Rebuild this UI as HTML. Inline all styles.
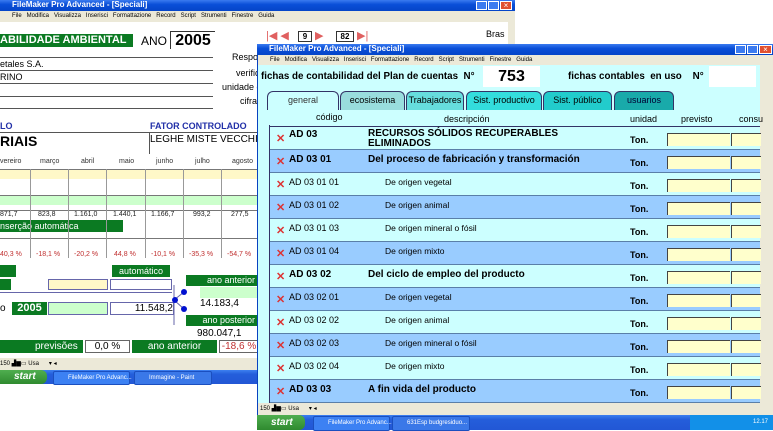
<!DOCTYPE html>
<html><head><meta charset="utf-8"><style>
*{margin:0;padding:0;box-sizing:border-box}
body{width:773px;height:430px;overflow:hidden;background:#fff;font-family:"Liberation Sans",sans-serif;position:relative}
.a{position:absolute;white-space:nowrap}
.tb{background:linear-gradient(#3a7bf0,#0a4fd8 40%,#0545c8);color:#fff;font-weight:bold;font-size:8px;line-height:10px;padding-left:12px}
.menu{background:#ece9d8;font-size:6px;line-height:9px;color:#000}
.g{background:#0b7a22;color:#fff}
.task{background:linear-gradient(#3d80f0,#245edb 30%,#2257d5);}
.start{background:linear-gradient(#4fae4f,#2f8a2f);color:#fff;font-style:italic;font-weight:bold;font-size:10px;line-height:13px;padding-left:14px;border-radius:0 6px 6px 0}
.tbtn{background:#3c81f3;color:#fff;font-size:6px;line-height:12px;padding-left:14px;border:1px solid #1b4fbf;border-radius:2px}
.hl{height:1px;background:#555}
.vl{width:1px;background:#555}
.row{position:absolute;left:270px;width:490px;height:23px;border-bottom:1px solid #5a7fa8}
.c{background:#ccffff}.b{background:#99ccff}
.x{position:absolute;left:6px;top:7px;color:#d33;font-size:11px;font-weight:bold;line-height:10px}
.cd{position:absolute;left:19px;top:4px;font-size:9px}
.ds{position:absolute;left:115px;top:4px;font-size:8.5px}
.bd{font-weight:bold;font-size:10px}
.ton{position:absolute;left:360px;top:8px;font-size:9px;font-weight:bold}
.y1{position:absolute;left:397px;top:6px;width:63px;height:13px;background:#ffffcc;border-left:1px solid #444;border-top:1px solid #444}
.y2{position:absolute;left:461px;top:6px;width:30px;height:13px;background:#ffffcc;border-left:1px solid #444;border-top:1px solid #444}
.tab{position:absolute;top:91px;height:19px;border:1px solid #336;border-bottom:none;border-radius:6px 6px 0 0;font-size:9px;text-align:center;line-height:17px}
.mon{font-size:7px;color:#333}
</style></head><body>
<!-- back window -->
<div class="a tb" style="left:0;top:0;width:515px;height:11px">FileMaker Pro Advanced - [Speciali]</div>
<div class="a" style="left:476px;top:1px;width:11px;height:9px;background:#3c7bf0;border:1px solid #fff"></div>
<div class="a" style="left:488px;top:1px;width:11px;height:9px;background:#3c7bf0;border:1px solid #fff"></div>
<div class="a" style="left:500px;top:1px;width:12px;height:9px;background:#e05030;border:1px solid #fff;color:#fff;font-size:8px;line-height:7px;text-align:center">×</div>
<div class="a menu" style="left:0;top:11px;width:515px;height:11px;padding-left:12px;line-height:11px">File&nbsp;&nbsp; Modifica&nbsp;&nbsp; Visualizza&nbsp;&nbsp; Inserisci&nbsp;&nbsp; Formattazione&nbsp;&nbsp; Record&nbsp;&nbsp; Script&nbsp;&nbsp; Strumenti&nbsp;&nbsp; Finestre&nbsp;&nbsp; Guida</div>
<div class="a" style="left:508px;top:22px;width:7px;height:22px;background:#ece9d8"></div>
<div class="a" style="left:266px;top:29px;color:#e06060;font-size:11px">|◀ ◀</div>
<div class="a" style="left:298px;top:31px;width:14px;height:11px;border:1px solid #333;font-size:8px;text-align:center;font-weight:bold">9</div>
<div class="a" style="left:315px;top:29px;color:#e06060;font-size:11px">▶</div>
<div class="a" style="left:336px;top:31px;width:18px;height:11px;border:1px solid #333;font-size:8px;text-align:center;font-weight:bold">82</div>
<div class="a" style="left:357px;top:29px;color:#e06060;font-size:11px">▶|</div>
<div class="a" style="left:486px;top:29px;font-size:9px">Bras</div>

<div class="a g" style="left:0;top:34px;width:133px;height:13px;font-weight:bold;font-size:11px;line-height:13px;overflow:hidden">ABILIDADE AMBIENTAL</div>
<div class="a" style="left:141px;top:34px;font-size:12px">ANO</div>
<div class="a" style="left:170px;top:31px;width:45px;height:18px;border-left:1px solid #333;border-top:1px solid #333;font-size:16px;font-weight:bold;text-align:center;line-height:18px">2005</div>
<div class="a hl" style="left:0;top:57px;width:213px"></div>
<div class="a hl" style="left:0;top:70px;width:213px"></div>
<div class="a hl" style="left:0;top:83px;width:213px"></div>
<div class="a hl" style="left:0;top:96px;width:213px"></div>
<div class="a hl" style="left:0;top:108px;width:213px"></div>
<div class="a" style="left:0;top:59px;font-size:9px">etales S.A.</div>
<div class="a" style="left:0;top:72px;font-size:9px">RINO</div>
<div class="a" style="left:232px;top:52px;font-size:9px">Respo</div>
<div class="a" style="left:236px;top:68px;font-size:9px">verific</div>
<div class="a" style="left:222px;top:82px;font-size:9px">unidade d</div>
<div class="a" style="left:240px;top:96px;font-size:9px">cifras</div>
<div class="a" style="left:0;top:121px;color:#2230a8;font-weight:bold;font-size:9px">LO</div>
<div class="a" style="left:150px;top:121px;color:#2230a8;font-weight:bold;font-size:9px">FATOR CONTROLADO</div>
<div class="a hl" style="left:0;top:132px;width:257px"></div>
<div class="a vl" style="left:149px;top:132px;height:22px"></div>
<div class="a" style="left:0;top:133px;font-weight:bold;font-size:14px">RIAIS</div>
<div class="a" style="left:150px;top:134px;font-size:10px">LEGHE MISTE VECCHIE</div>
<div class="a mon" style="left:0;top:158px">vereiro</div>
<div class="a mon" style="left:40px;top:158px">março</div>
<div class="a mon" style="left:81px;top:158px">abril</div>
<div class="a mon" style="left:119px;top:158px">maio</div>
<div class="a mon" style="left:156px;top:158px">junho</div>
<div class="a mon" style="left:195px;top:158px">julho</div>
<div class="a mon" style="left:232px;top:158px">agosto</div>
<div class="a" style="left:0;top:169px;width:257px;height:10px;background:#fff8c8;border-top:1px solid #777"></div>
<div class="a" style="left:0;top:195px;width:257px;height:10px;background:#ccffcc;border-top:1px solid #777"></div>
<div class="a" style="left:0;top:210px;width:257px;height:9px;border-top:1px solid #777;font-size:7px;color:#222">
<span class="a" style="left:0">871,7</span><span class="a" style="left:38px">823,8</span><span class="a" style="left:74px">1.161,0</span><span class="a" style="left:113px">1.440,1</span><span class="a" style="left:151px">1.166,7</span><span class="a" style="left:193px">993,2</span><span class="a" style="left:231px">277,5</span></div>
<div class="a g" style="left:0;top:220px;width:123px;height:12px;font-size:9px;line-height:12px">nserção automática</div>
<div class="a" style="left:0;top:238px;width:257px;height:10px;border-top:1px solid #777"></div>
<div class="a" style="left:0;top:251px;width:257px;height:10px;font-size:7px;color:#c03030">
<span class="a" style="left:0">40,3 %</span><span class="a" style="left:36px">-18,1 %</span><span class="a" style="left:74px">-20,2 %</span><span class="a" style="left:114px">44,8 %</span><span class="a" style="left:151px">-10,1 %</span><span class="a" style="left:189px">-35,3 %</span><span class="a" style="left:227px">-54,7 %</span></div>
<div class="a vl" style="left:30px;top:169px;height:89px;background:#999"></div>
<div class="a vl" style="left:68px;top:169px;height:89px;background:#999"></div>
<div class="a vl" style="left:106px;top:169px;height:89px;background:#999"></div>
<div class="a vl" style="left:145px;top:169px;height:89px;background:#999"></div>
<div class="a vl" style="left:183px;top:169px;height:89px;background:#999"></div>
<div class="a vl" style="left:221px;top:169px;height:89px;background:#999"></div>
<div class="a g" style="left:0;top:265px;width:16px;height:12px"></div>
<div class="a g" style="left:112px;top:265px;width:58px;height:12px;font-size:9px;line-height:12px;text-align:center">automático</div>
<div class="a g" style="left:186px;top:275px;width:72px;height:11px;font-size:9px;line-height:11px;text-align:right;padding-right:3px">ano anterior</div>
<div class="a g" style="left:0;top:279px;width:11px;height:11px"></div>
<div class="a" style="left:48px;top:279px;width:60px;height:11px;background:#fff8c8;border:1px solid #66a"></div>
<div class="a" style="left:110px;top:279px;width:62px;height:11px;border:1px solid #66a"></div>
<div class="a" style="left:200px;top:287px;width:58px;height:11px;background:#ccffcc"></div>
<div class="a hl" style="left:0;top:292px;width:172px;background:#66a"></div>
<div class="a" style="left:0;top:303px;font-size:10px">o</div>
<div class="a g" style="left:12px;top:302px;width:35px;height:13px;font-weight:bold;font-size:11px;line-height:13px;text-align:center">2005</div>
<div class="a" style="left:48px;top:302px;width:60px;height:13px;background:#ccffcc;border:1px solid #66a"></div>
<div class="a" style="left:110px;top:302px;width:64px;height:13px;border:1px solid #66a;font-size:10px;text-align:right;line-height:12px">11.548,2</div>
<div class="a" style="left:200px;top:298px;font-size:10px">14.183,4</div>
<svg class="a" style="left:168px;top:285px" width="22" height="40"><path d="M6 0V40M6 15L16 7M6 15L16 24" stroke="#66a" fill="none"/><circle cx="16" cy="7" r="3" fill="#0010d0"/><circle cx="7" cy="15" r="3" fill="#0010d0"/><circle cx="16" cy="24" r="3" fill="#0010d0"/></svg>
<div class="a g" style="left:186px;top:315px;width:72px;height:11px;font-size:9px;line-height:11px;text-align:right;padding-right:3px">ano posterior</div>
<div class="a" style="left:197px;top:328px;font-size:10px">980.047,1</div>
<div class="a g" style="left:0;top:340px;width:83px;height:13px;font-size:10px;line-height:13px;padding-left:35px">previsões</div>
<div class="a" style="left:85px;top:340px;width:45px;height:13px;border:1px solid #666;font-size:10px;text-align:center;line-height:12px">0,0 %</div>
<div class="a g" style="left:132px;top:340px;width:85px;height:13px;font-size:10px;line-height:13px;text-align:center">ano anterior</div>
<div class="a" style="left:219px;top:340px;width:40px;height:13px;border:1px solid #666;font-size:10px;text-align:center;line-height:12px;color:#c03030">-18,6 %</div>
<div class="a" style="left:0;top:358px;width:257px;height:12px;background:#ece9d8;font-size:6px;line-height:12px">150 ▟▆▭ Usa &nbsp;&nbsp;&nbsp;&nbsp;&nbsp;▾ ◂</div>
<div class="a task" style="left:0;top:370px;width:257px;height:14px"></div>
<div class="a start" style="left:0;top:370px;width:47px;height:14px">start</div>
<div class="a tbtn" style="left:53px;top:371px;width:77px">FileMaker Pro Advanc...</div>
<div class="a tbtn" style="left:134px;top:371px;width:78px;background:#3a78e8">Immagine - Paint</div>

<!-- front window -->
<div class="a" style="left:257px;top:44px;width:516px;height:386px;background:#ccffff;border-left:1px solid #0842c0"></div>
<div class="a tb" style="left:257px;top:44px;width:516px;height:11px">FileMaker Pro Advanced - [Speciali]</div>
<div class="a" style="left:735px;top:45px;width:11px;height:9px;background:#3c7bf0;border:1px solid #fff"></div>
<div class="a" style="left:747px;top:45px;width:11px;height:9px;background:#3c7bf0;border:1px solid #fff"></div>
<div class="a" style="left:759px;top:45px;width:13px;height:9px;background:#e05030;border:1px solid #fff;color:#fff;font-size:8px;line-height:7px;text-align:center">×</div>
<div class="a menu" style="left:258px;top:55px;width:515px;height:10px;padding-left:12px;line-height:10px">File&nbsp;&nbsp; Modifica&nbsp;&nbsp; Visualizza&nbsp;&nbsp; Inserisci&nbsp;&nbsp; Formattazione&nbsp;&nbsp; Record&nbsp;&nbsp; Script&nbsp;&nbsp; Strumenti&nbsp;&nbsp; Finestre&nbsp;&nbsp; Guida</div>
<div class="a" style="left:760px;top:65px;width:13px;height:339px;background:#ece9d8"></div>
<div class="a" style="left:261px;top:71px;font-weight:bold;font-size:9.8px">fichas de contabilidad del Plan de cuentas&nbsp; N°</div>
<div class="a" style="left:483px;top:66px;width:57px;height:21px;background:#fff;font-weight:bold;font-size:16px;text-align:center;line-height:21px">753</div>
<div class="a" style="left:568px;top:71px;font-weight:bold;font-size:9.8px">fichas contables&nbsp; en uso&nbsp;&nbsp;&nbsp; N°</div>
<div class="a" style="left:709px;top:66px;width:47px;height:21px;background:#fff"></div>
<div class="tab" style="left:267px;width:72px;background:#ccffff;color:#333">general</div>
<div class="tab" style="left:340px;width:65px;background:#99dddd">ecosistema</div>
<div class="tab" style="left:406px;width:58px;background:#66dddd">Trabajadores</div>
<div class="tab" style="left:466px;width:76px;background:#33dddd">Sist. productivo</div>
<div class="tab" style="left:543px;width:69px;background:#22cccc">Sist. público</div>
<div class="tab" style="left:614px;width:60px;background:#19aaaa;color:#003">usuarios</div>
<div class="a" style="left:316px;top:112px;font-size:9px">código</div>
<div class="a" style="left:444px;top:114px;font-size:9px">descripción</div>
<div class="a" style="left:630px;top:114px;font-size:9px">unidad</div>
<div class="a" style="left:681px;top:114px;font-size:9px">previsto</div>
<div class="a" style="left:739px;top:114px;font-size:9px">consu</div>
<div class="a" style="left:269px;top:125px;width:1px;height:280px;background:#336"></div>

<div class="row c" style="top:126px;height:24px;border-top:1px solid #336"><span class="x">✕</span><span class="cd bd" style="top:2px">AD 03</span><span class="ds bd" style="left:98px;top:2px;line-height:10px">RECURSOS SÓLIDOS RECUPERABLES<br>ELIMINADOS</span><span class="ton">Ton.</span><span class="y1"></span><span class="y2"></span></div>
<div class="row b" style="top:150px"><span class="x">✕</span><span class="cd bd">AD 03 01</span><span class="ds bd" style="left:98px">Del proceso de fabricación y transformación</span><span class="ton">Ton.</span><span class="y1"></span><span class="y2"></span></div>
<div class="row c" style="top:173px"><span class="x">✕</span><span class="cd">AD 03 01 01</span><span class="ds">De origen vegetal</span><span class="ton">Ton.</span><span class="y1"></span><span class="y2"></span></div>
<div class="row b" style="top:196px"><span class="x">✕</span><span class="cd">AD 03 01 02</span><span class="ds">De origen animal</span><span class="ton">Ton.</span><span class="y1"></span><span class="y2"></span></div>
<div class="row c" style="top:219px"><span class="x">✕</span><span class="cd">AD 03 01 03</span><span class="ds">De origen mineral o fósil</span><span class="ton">Ton.</span><span class="y1"></span><span class="y2"></span></div>
<div class="row b" style="top:242px"><span class="x">✕</span><span class="cd">AD 03 01 04</span><span class="ds">De origen mixto</span><span class="ton">Ton.</span><span class="y1"></span><span class="y2"></span></div>
<div class="row c" style="top:265px"><span class="x">✕</span><span class="cd bd">AD 03 02</span><span class="ds bd" style="left:98px">Del ciclo de empleo del producto</span><span class="ton">Ton.</span><span class="y1"></span><span class="y2"></span></div>
<div class="row b" style="top:288px"><span class="x">✕</span><span class="cd">AD 03 02 01</span><span class="ds">De origen vegetal</span><span class="ton">Ton.</span><span class="y1"></span><span class="y2"></span></div>
<div class="row c" style="top:311px"><span class="x">✕</span><span class="cd">AD 03 02 02</span><span class="ds">De origen animal</span><span class="ton">Ton.</span><span class="y1"></span><span class="y2"></span></div>
<div class="row b" style="top:334px"><span class="x">✕</span><span class="cd">AD 03 02 03</span><span class="ds">De origen mineral o fósil</span><span class="ton">Ton.</span><span class="y1"></span><span class="y2"></span></div>
<div class="row c" style="top:357px"><span class="x">✕</span><span class="cd">AD 03 02 04</span><span class="ds">De origen mixto</span><span class="ton">Ton.</span><span class="y1"></span><span class="y2"></span></div>
<div class="row b" style="top:380px"><span class="x">✕</span><span class="cd bd">AD 03 03</span><span class="ds bd" style="left:98px">A fin vida del producto</span><span class="ton">Ton.</span><span class="y1"></span><span class="y2"></span></div>
<div class="a" style="left:258px;top:403px;width:515px;height:12px;background:#ece9d8;font-size:6px;line-height:12px;padding-left:2px">150 ▟▆▭ Usa &nbsp;&nbsp;&nbsp;&nbsp;&nbsp;▾ ◂</div>
<div class="a task" style="left:257px;top:415px;width:516px;height:15px"></div>
<div class="a start" style="left:257px;top:415px;width:48px;height:15px;line-height:15px">start</div>
<div class="a tbtn" style="left:313px;top:416px;width:77px;line-height:13px">FileMaker Pro Advanc...</div>
<div class="a tbtn" style="left:392px;top:416px;width:78px;line-height:13px;background:#3a78e8">631Esp budgresiduo...</div>
<div class="a" style="left:690px;top:415px;width:83px;height:15px;background:#1290e8;color:#fff;font-size:6px;line-height:15px;text-align:right;padding-right:5px">12.17</div>
</body></html>
